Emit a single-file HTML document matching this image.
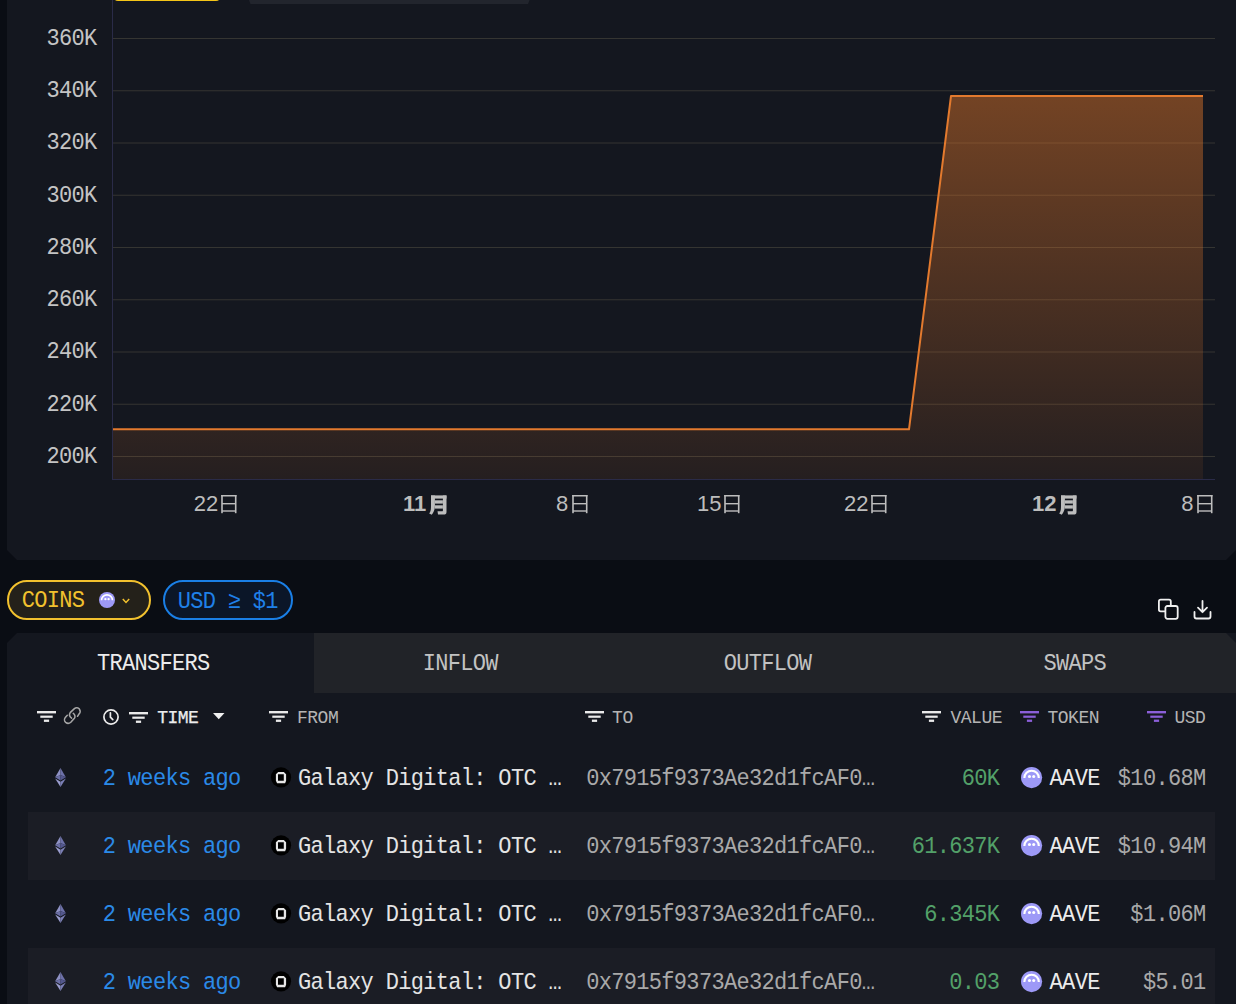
<!DOCTYPE html>
<html><head><meta charset="utf-8"><style>*{margin:0;padding:0;box-sizing:border-box}
html,body{width:1236px;height:1004px;overflow:hidden;background:#0a0d14;font-family:"Liberation Mono",monospace}
.a{position:absolute}
.m{position:absolute;white-space:nowrap;font-family:"Liberation Mono",monospace}
.s{position:absolute;white-space:nowrap;font-family:"Liberation Sans",sans-serif}
svg{position:absolute;overflow:visible}
</style></head><body>
<div class="a" style="left:7px;top:-40px;width:1229px;height:600px;background:#14171f;clip-path:polygon(0 0,100% 0,100% calc(100% - 10px),calc(100% - 10px) 100%,10px 100%,0 calc(100% - 10px))"></div>
<div class="a" style="left:113.5px;top:-5px;width:106.5px;height:6px;background:#f5c518;border-radius:0 0 4px 4px"></div>
<div class="a" style="left:246.5px;top:-6px;width:285.5px;height:10px;background:#22252d;clip-path:polygon(0 0,100% 0,calc(100% - 4px) 100%,4px 100%)"></div>
<svg style="left:0;top:0" width="1236" height="560">
<defs><linearGradient id="fg" x1="0" y1="96" x2="0" y2="479" gradientUnits="userSpaceOnUse">
<stop offset="0" stop-color="#e8792a" stop-opacity="0.45"/><stop offset="1" stop-color="#e8792a" stop-opacity="0.08"/></linearGradient></defs>
<g stroke="#353532" stroke-width="1"><line x1="113" y1="38.50" x2="1215" y2="38.50"/><line x1="113" y1="90.75" x2="1215" y2="90.75"/><line x1="113" y1="143.00" x2="1215" y2="143.00"/><line x1="113" y1="195.25" x2="1215" y2="195.25"/><line x1="113" y1="247.50" x2="1215" y2="247.50"/><line x1="113" y1="299.75" x2="1215" y2="299.75"/><line x1="113" y1="352.00" x2="1215" y2="352.00"/><line x1="113" y1="404.25" x2="1215" y2="404.25"/><line x1="113" y1="456.50" x2="1215" y2="456.50"/></g>
<path d="M113 429.3 L909 429.3 L951 96 L1203 96 L1203 479 L113 479 Z" fill="url(#fg)"/>
<path d="M113 429.3 L909 429.3 L951 96 L1203 96" fill="none" stroke="#e37a2e" stroke-width="2" stroke-linejoin="round"/>
<line x1="112.5" y1="0" x2="112.5" y2="480" stroke="#2a2b48" stroke-width="1"/>
<line x1="112" y1="479.5" x2="1215" y2="479.5" stroke="#2a2b48" stroke-width="1"/>
</svg>
<div class="m" style="left:-303.50px;width:400px;text-align:right;top:25.95px;font-size:22px;letter-spacing:-0.68px;line-height:28px;color:#c4c4c4;transform:scaleY(1.07);transform-origin:0 19.85px;">360K</div>
<div class="m" style="left:-303.50px;width:400px;text-align:right;top:78.20px;font-size:22px;letter-spacing:-0.68px;line-height:28px;color:#c4c4c4;transform:scaleY(1.07);transform-origin:0 19.85px;">340K</div>
<div class="m" style="left:-303.50px;width:400px;text-align:right;top:130.45px;font-size:22px;letter-spacing:-0.68px;line-height:28px;color:#c4c4c4;transform:scaleY(1.07);transform-origin:0 19.85px;">320K</div>
<div class="m" style="left:-303.50px;width:400px;text-align:right;top:182.70px;font-size:22px;letter-spacing:-0.68px;line-height:28px;color:#c4c4c4;transform:scaleY(1.07);transform-origin:0 19.85px;">300K</div>
<div class="m" style="left:-303.50px;width:400px;text-align:right;top:234.95px;font-size:22px;letter-spacing:-0.68px;line-height:28px;color:#c4c4c4;transform:scaleY(1.07);transform-origin:0 19.85px;">280K</div>
<div class="m" style="left:-303.50px;width:400px;text-align:right;top:287.20px;font-size:22px;letter-spacing:-0.68px;line-height:28px;color:#c4c4c4;transform:scaleY(1.07);transform-origin:0 19.85px;">260K</div>
<div class="m" style="left:-303.50px;width:400px;text-align:right;top:339.45px;font-size:22px;letter-spacing:-0.68px;line-height:28px;color:#c4c4c4;transform:scaleY(1.07);transform-origin:0 19.85px;">240K</div>
<div class="m" style="left:-303.50px;width:400px;text-align:right;top:391.70px;font-size:22px;letter-spacing:-0.68px;line-height:28px;color:#c4c4c4;transform:scaleY(1.07);transform-origin:0 19.85px;">220K</div>
<div class="m" style="left:-303.50px;width:400px;text-align:right;top:443.95px;font-size:22px;letter-spacing:-0.68px;line-height:28px;color:#c4c4c4;transform:scaleY(1.07);transform-origin:0 19.85px;">200K</div>
<div class="s" style="left:193.80px;top:490.87px;font-size:22px;line-height:26px;color:#bdbdbd;">22</div>
<svg width="16" height="19" viewBox="0 0 16 19" style="position:absolute;left:221.1px;top:494.8px"><g fill="#bdbdbd"><rect x="0.2" y="0" width="1.6" height="18.2"/><rect x="13.9" y="0" width="1.6" height="18.2"/><rect x="0.2" y="0" width="15.3" height="1.5"/><rect x="1" y="8" width="13.5" height="1.4"/><rect x="1" y="15.3" width="13.5" height="1.4"/></g></svg>
<div class="s" style="left:402.90px;top:490.87px;font-size:22px;line-height:26px;color:#bdbdbd;font-weight:bold;">11</div>
<svg width="19" height="20" viewBox="0 0 19 20" style="position:absolute;left:428px;top:494.5px"><g fill="#bdbdbd"><path d="M3 0.4H6.9V11C6.9 14.5 5.8 17.2 3.7 19.8L1.2 18.6C2.8 16.5 3 14 3 11Z"/><path d="M3 0.4H18.5V3.6H3Z"/><path d="M14.9 0.4H18.5V17C18.5 18.8 17.5 19.6 15.5 19.6H10L9.5 16.3H14.2C14.8 16.3 14.9 16 14.9 15.5Z"/><path d="M6.9 5.3H14.9V8.6H6.9Z"/><path d="M6.9 10.3H14.9V13.6H6.9Z"/></g></svg>
<div class="s" style="left:556.00px;top:490.87px;font-size:22px;line-height:26px;color:#bdbdbd;">8</div>
<svg width="16" height="19" viewBox="0 0 16 19" style="position:absolute;left:571.5px;top:494.8px"><g fill="#bdbdbd"><rect x="0.2" y="0" width="1.6" height="18.2"/><rect x="13.9" y="0" width="1.6" height="18.2"/><rect x="0.2" y="0" width="15.3" height="1.5"/><rect x="1" y="8" width="13.5" height="1.4"/><rect x="1" y="15.3" width="13.5" height="1.4"/></g></svg>
<div class="s" style="left:696.90px;top:490.87px;font-size:22px;line-height:26px;color:#bdbdbd;">15</div>
<svg width="16" height="19" viewBox="0 0 16 19" style="position:absolute;left:723.8px;top:494.8px"><g fill="#bdbdbd"><rect x="0.2" y="0" width="1.6" height="18.2"/><rect x="13.9" y="0" width="1.6" height="18.2"/><rect x="0.2" y="0" width="15.3" height="1.5"/><rect x="1" y="8" width="13.5" height="1.4"/><rect x="1" y="15.3" width="13.5" height="1.4"/></g></svg>
<div class="s" style="left:844.00px;top:490.87px;font-size:22px;line-height:26px;color:#bdbdbd;">22</div>
<svg width="16" height="19" viewBox="0 0 16 19" style="position:absolute;left:870.8px;top:494.8px"><g fill="#bdbdbd"><rect x="0.2" y="0" width="1.6" height="18.2"/><rect x="13.9" y="0" width="1.6" height="18.2"/><rect x="0.2" y="0" width="15.3" height="1.5"/><rect x="1" y="8" width="13.5" height="1.4"/><rect x="1" y="15.3" width="13.5" height="1.4"/></g></svg>
<div class="s" style="left:1031.90px;top:490.87px;font-size:22px;line-height:26px;color:#bdbdbd;font-weight:bold;">12</div>
<svg width="19" height="20" viewBox="0 0 19 20" style="position:absolute;left:1058px;top:494.5px"><g fill="#bdbdbd"><path d="M3 0.4H6.9V11C6.9 14.5 5.8 17.2 3.7 19.8L1.2 18.6C2.8 16.5 3 14 3 11Z"/><path d="M3 0.4H18.5V3.6H3Z"/><path d="M14.9 0.4H18.5V17C18.5 18.8 17.5 19.6 15.5 19.6H10L9.5 16.3H14.2C14.8 16.3 14.9 16 14.9 15.5Z"/><path d="M6.9 5.3H14.9V8.6H6.9Z"/><path d="M6.9 10.3H14.9V13.6H6.9Z"/></g></svg>
<div class="s" style="left:1181.30px;top:490.87px;font-size:22px;line-height:26px;color:#bdbdbd;">8</div>
<svg width="16" height="19" viewBox="0 0 16 19" style="position:absolute;left:1196.8px;top:494.8px"><g fill="#bdbdbd"><rect x="0.2" y="0" width="1.6" height="18.2"/><rect x="13.9" y="0" width="1.6" height="18.2"/><rect x="0.2" y="0" width="15.3" height="1.5"/><rect x="1" y="8" width="13.5" height="1.4"/><rect x="1" y="15.3" width="13.5" height="1.4"/></g></svg>
<div class="a" style="left:7px;top:580px;width:144px;height:39.5px;border:2px solid #f2c12e;border-radius:20px;background:#24211a"></div>
<div class="m" style="left:21.70px;top:588.45px;font-size:22px;line-height:28px;color:#f2c12e;transform:scaleY(1.07);transform-origin:0 19.85px;letter-spacing:-0.68px;">COINS</div>
<svg width="16" height="16" viewBox="0 0 22 22" style="left:99px;top:592px"><circle cx="11" cy="11" r="11" fill="#9d99f7"/><path d="M3.5 11.4A7.5 7.5 0 0 1 18.5 11.4" fill="none" stroke="#fff" stroke-width="2.2"/><circle cx="8.8" cy="9.9" r="1.6" fill="#fff"/><circle cx="13.2" cy="9.9" r="1.6" fill="#fff"/></svg>
<svg width="8" height="6" viewBox="0 0 8 6" style="left:121.5px;top:597.5px"><path d="M0.8 1L4 4.4L7.2 1" fill="none" stroke="#f2c12e" stroke-width="1.5"/></svg>
<div class="a" style="left:163px;top:580px;width:130px;height:40px;border:2px solid #1a7fe6;border-radius:20px;background:#0b1628"></div>
<div class="m" style="left:177.70px;top:588.85px;font-size:22px;line-height:28px;color:#1f80e8;transform:scaleY(1.07);transform-origin:0 19.85px;letter-spacing:-0.68px;">USD ≥ $1</div>
<svg width="22" height="22" viewBox="0 0 22 22" style="left:1157px;top:598px"><g fill="none" stroke="#f0f0f0" stroke-width="1.8" stroke-linejoin="round"><path d="M13.8 7.9V3.5C13.8 2.4 13.1 1.7 12 1.7H3.7C2.6 1.7 1.9 2.4 1.9 3.5V11.6C1.9 12.7 2.6 13.4 3.7 13.4H8.3"/><rect x="8.4" y="8" width="12.3" height="12.8" rx="2"/></g></svg>
<svg width="20" height="20" viewBox="0 0 20 20" style="left:1192.5px;top:599.5px"><g fill="none" stroke="#f0f0f0" stroke-width="1.8" stroke-linecap="round" stroke-linejoin="round"><path d="M9.5 1V12M5 7.7L9.5 12.2L14 7.7"/><path d="M1.5 12V16.5C1.5 18 2.2 18.5 3.5 18.5H15.5C17 18.5 17.5 18 17.5 16.5V12"/></g></svg>
<div class="a" style="left:7px;top:633px;width:1229px;height:400px;background:#14171f;clip-path:polygon(10px 0,100% 0,100% 100%,0 100%,0 10px)"></div>
<div class="a" style="left:314px;top:633px;width:922px;height:60px;background:#212328;clip-path:polygon(0 0,calc(100% - 10px) 0,100% 10px,100% 100%,0 100%)"></div>
<div class="m" style="left:96.90px;top:651.15px;font-size:22px;line-height:28px;color:#ececec;transform:scaleY(1.07);transform-origin:0 19.85px;letter-spacing:-0.68px;">TRANSFERS</div>
<div class="m" style="left:422.70px;top:651.05px;font-size:22px;line-height:28px;color:#c2c2c2;transform:scaleY(1.07);transform-origin:0 19.85px;letter-spacing:-0.68px;">INFLOW</div>
<div class="m" style="left:723.70px;top:651.05px;font-size:22px;line-height:28px;color:#c2c2c2;transform:scaleY(1.07);transform-origin:0 19.85px;letter-spacing:-0.68px;">OUTFLOW</div>
<div class="m" style="left:1043.40px;top:651.05px;font-size:22px;line-height:28px;color:#c2c2c2;transform:scaleY(1.07);transform-origin:0 19.85px;letter-spacing:-0.68px;">SWAPS</div>
<svg width="20" height="12" viewBox="0 0 20 12" style="left:37.1px;top:711.4px"><g fill="#eaeaea"><rect x="0" y="0" width="19" height="2.4"/><rect x="3.3" y="4.6" width="12.4" height="2.2"/><rect x="6.9" y="8.6" width="5.2" height="2.3"/></g></svg>
<svg width="21" height="21" viewBox="0 0 21 21" style="left:62px;top:705px"><g fill="none" stroke="#a6a6a6" stroke-width="1.55" stroke-linecap="round"><path d="M9.6 13.1C7.8 11.8 6.9 9.6 8.2 7.6L12.4 3.6C14 2.3 16.2 2.6 17.4 4.1C18.4 5.6 18.2 7.7 17 9L15.5 11.3"/><path d="M5.3 10.3L3.3 12.4C2.1 13.9 2.3 16.2 3.7 17.4C5.2 18.6 7.5 18.4 8.8 17.2L12.4 13.3C13.5 11.8 13 9.6 11.3 8.4"/></g></svg>
<svg width="18" height="18" viewBox="0 0 18 18" style="left:101.5px;top:707.8px"><g fill="none" stroke="#ececec" stroke-width="1.7" stroke-linecap="round"><circle cx="9" cy="9" r="7.1"/><path d="M8.4 4.8V9.2L10.8 11.6"/></g></svg>
<svg width="20" height="12" viewBox="0 0 20 12" style="left:128.9px;top:711.5px"><g fill="#eaeaea"><rect x="0" y="0" width="19" height="2.4"/><rect x="3.3" y="4.6" width="12.4" height="2.2"/><rect x="6.9" y="8.6" width="5.2" height="2.3"/></g></svg>
<div class="m" style="left:157.20px;top:706.71px;font-size:18px;line-height:23px;color:#ececec;letter-spacing:-0.5px;-webkit-text-stroke:0.25px #ececec;">TIME</div>
<svg width="12" height="7" viewBox="0 0 12 7" style="left:212.5px;top:713.3px"><path d="M0 0H11.5L5.75 6.3Z" fill="#f0f0f0"/></svg>
<svg width="20" height="12" viewBox="0 0 20 12" style="left:268.9px;top:711.2px"><g fill="#eaeaea"><rect x="0" y="0" width="19" height="2.4"/><rect x="3.3" y="4.6" width="12.4" height="2.2"/><rect x="6.9" y="8.6" width="5.2" height="2.3"/></g></svg>
<div class="m" style="left:297.00px;top:706.81px;font-size:18px;line-height:23px;color:#b4b4b4;letter-spacing:-0.5px;">FROM</div>
<svg width="20" height="12" viewBox="0 0 20 12" style="left:584.9px;top:711.4px"><g fill="#eaeaea"><rect x="0" y="0" width="19" height="2.4"/><rect x="3.3" y="4.6" width="12.4" height="2.2"/><rect x="6.9" y="8.6" width="5.2" height="2.3"/></g></svg>
<div class="m" style="left:612.10px;top:706.81px;font-size:18px;line-height:23px;color:#b4b4b4;letter-spacing:-0.5px;">TO</div>
<svg width="20" height="12" viewBox="0 0 20 12" style="left:922.1px;top:711.4px"><g fill="#eaeaea"><rect x="0" y="0" width="19" height="2.4"/><rect x="3.3" y="4.6" width="12.4" height="2.2"/><rect x="6.9" y="8.6" width="5.2" height="2.3"/></g></svg>
<div class="m" style="left:950.50px;top:706.81px;font-size:18px;line-height:23px;color:#b4b4b4;letter-spacing:-0.5px;">VALUE</div>
<svg width="20" height="12" viewBox="0 0 20 12" style="left:1020px;top:711.4px"><g fill="#8b5fd8"><rect x="0" y="0" width="19" height="2.4"/><rect x="3.3" y="4.6" width="12.4" height="2.2"/><rect x="6.9" y="8.6" width="5.2" height="2.3"/></g></svg>
<div class="m" style="left:1047.50px;top:706.81px;font-size:18px;line-height:23px;color:#b4b4b4;letter-spacing:-0.5px;">TOKEN</div>
<svg width="20" height="12" viewBox="0 0 20 12" style="left:1147.2px;top:711.4px"><g fill="#8b5fd8"><rect x="0" y="0" width="19" height="2.4"/><rect x="3.3" y="4.6" width="12.4" height="2.2"/><rect x="6.9" y="8.6" width="5.2" height="2.3"/></g></svg>
<div class="m" style="left:1174.50px;top:706.81px;font-size:18px;line-height:23px;color:#b4b4b4;letter-spacing:-0.5px;">USD</div>
<svg width="11" height="19" viewBox="0 0 10.6 18.8" style="left:54.6px;top:768px"><path d="M5.3 0L0 9.2L5.3 7Z" fill="#8e91c4"/><path d="M5.3 0L10.6 9.2L5.3 7Z" fill="#6d71a9"/><path d="M0 9.2L5.3 12.4L5.3 7Z" fill="#6a6ea5"/><path d="M10.6 9.2L5.3 12.4L5.3 7Z" fill="#53578d"/><path d="M0 10.4L5.3 18.8L5.3 13.6Z" fill="#9a9dce"/><path d="M10.6 10.4L5.3 18.8L5.3 13.6Z" fill="#7b7fb6"/></svg>
<div class="m" style="left:102.80px;top:765.95px;font-size:22px;line-height:28px;color:#2b8ae8;transform:scaleY(1.07);transform-origin:0 19.85px;letter-spacing:-0.68px;">2 weeks ago</div>
<svg width="26" height="26" viewBox="0 0 26 26" style="left:268px;top:764px"><circle cx="13" cy="13.3" r="10.1" fill="#000"/><path fill-rule="evenodd" fill="#e6e6e6" d="M10.2 8H15.8L18.1 10.3V16.8L17.1 19.2H9.1L7.9 16.8V10.3Z M10 10.2V16.7H15.8V10.2Z"/></svg>
<div class="m" style="left:298.00px;top:765.95px;font-size:22px;line-height:28px;color:#e4e4e4;transform:scaleY(1.07);transform-origin:0 19.85px;letter-spacing:-0.68px;">Galaxy Digital: OTC …</div>
<div class="m" style="left:586.20px;top:765.95px;font-size:22px;line-height:28px;color:#a9a9a9;transform:scaleY(1.07);transform-origin:0 19.85px;letter-spacing:-0.68px;">0x7915f9373Ae32d1fcAF0…</div>
<div class="m" style="left:599.30px;width:400px;text-align:right;top:765.95px;font-size:22px;letter-spacing:-0.68px;line-height:28px;color:#53a169;transform:scaleY(1.07);transform-origin:0 19.85px;">60K</div>
<svg width="21.2" height="21.2" viewBox="0 0 22 22" style="left:1020.9px;top:766.9px"><circle cx="11" cy="11" r="11" fill="#9d99f7"/><path d="M3.5 11.4A7.5 7.5 0 0 1 18.5 11.4" fill="none" stroke="#fff" stroke-width="2.2"/><circle cx="8.8" cy="9.9" r="1.6" fill="#fff"/><circle cx="13.2" cy="9.9" r="1.6" fill="#fff"/></svg>
<div class="m" style="left:1049.60px;top:765.95px;font-size:22px;line-height:28px;color:#ececec;transform:scaleY(1.07);transform-origin:0 19.85px;letter-spacing:-0.68px;">AAVE</div>
<div class="m" style="left:805.50px;width:400px;text-align:right;top:765.95px;font-size:22px;letter-spacing:-0.68px;line-height:28px;color:#a9a9a9;transform:scaleY(1.07);transform-origin:0 19.85px;">$10.68M</div>
<div class="a" style="left:28px;top:812px;width:1187px;height:68px;background:#1b1d25"></div>
<svg width="11" height="19" viewBox="0 0 10.6 18.8" style="left:54.6px;top:836px"><path d="M5.3 0L0 9.2L5.3 7Z" fill="#8e91c4"/><path d="M5.3 0L10.6 9.2L5.3 7Z" fill="#6d71a9"/><path d="M0 9.2L5.3 12.4L5.3 7Z" fill="#6a6ea5"/><path d="M10.6 9.2L5.3 12.4L5.3 7Z" fill="#53578d"/><path d="M0 10.4L5.3 18.8L5.3 13.6Z" fill="#9a9dce"/><path d="M10.6 10.4L5.3 18.8L5.3 13.6Z" fill="#7b7fb6"/></svg>
<div class="m" style="left:102.80px;top:833.95px;font-size:22px;line-height:28px;color:#2b8ae8;transform:scaleY(1.07);transform-origin:0 19.85px;letter-spacing:-0.68px;">2 weeks ago</div>
<svg width="26" height="26" viewBox="0 0 26 26" style="left:268px;top:832px"><circle cx="13" cy="13.3" r="10.1" fill="#000"/><path fill-rule="evenodd" fill="#e6e6e6" d="M10.2 8H15.8L18.1 10.3V16.8L17.1 19.2H9.1L7.9 16.8V10.3Z M10 10.2V16.7H15.8V10.2Z"/></svg>
<div class="m" style="left:298.00px;top:833.95px;font-size:22px;line-height:28px;color:#e4e4e4;transform:scaleY(1.07);transform-origin:0 19.85px;letter-spacing:-0.68px;">Galaxy Digital: OTC …</div>
<div class="m" style="left:586.20px;top:833.95px;font-size:22px;line-height:28px;color:#a9a9a9;transform:scaleY(1.07);transform-origin:0 19.85px;letter-spacing:-0.68px;">0x7915f9373Ae32d1fcAF0…</div>
<div class="m" style="left:599.30px;width:400px;text-align:right;top:833.95px;font-size:22px;letter-spacing:-0.68px;line-height:28px;color:#53a169;transform:scaleY(1.07);transform-origin:0 19.85px;">61.637K</div>
<svg width="21.2" height="21.2" viewBox="0 0 22 22" style="left:1020.9px;top:834.9px"><circle cx="11" cy="11" r="11" fill="#9d99f7"/><path d="M3.5 11.4A7.5 7.5 0 0 1 18.5 11.4" fill="none" stroke="#fff" stroke-width="2.2"/><circle cx="8.8" cy="9.9" r="1.6" fill="#fff"/><circle cx="13.2" cy="9.9" r="1.6" fill="#fff"/></svg>
<div class="m" style="left:1049.60px;top:833.95px;font-size:22px;line-height:28px;color:#ececec;transform:scaleY(1.07);transform-origin:0 19.85px;letter-spacing:-0.68px;">AAVE</div>
<div class="m" style="left:805.50px;width:400px;text-align:right;top:833.95px;font-size:22px;letter-spacing:-0.68px;line-height:28px;color:#a9a9a9;transform:scaleY(1.07);transform-origin:0 19.85px;">$10.94M</div>
<svg width="11" height="19" viewBox="0 0 10.6 18.8" style="left:54.6px;top:904px"><path d="M5.3 0L0 9.2L5.3 7Z" fill="#8e91c4"/><path d="M5.3 0L10.6 9.2L5.3 7Z" fill="#6d71a9"/><path d="M0 9.2L5.3 12.4L5.3 7Z" fill="#6a6ea5"/><path d="M10.6 9.2L5.3 12.4L5.3 7Z" fill="#53578d"/><path d="M0 10.4L5.3 18.8L5.3 13.6Z" fill="#9a9dce"/><path d="M10.6 10.4L5.3 18.8L5.3 13.6Z" fill="#7b7fb6"/></svg>
<div class="m" style="left:102.80px;top:901.95px;font-size:22px;line-height:28px;color:#2b8ae8;transform:scaleY(1.07);transform-origin:0 19.85px;letter-spacing:-0.68px;">2 weeks ago</div>
<svg width="26" height="26" viewBox="0 0 26 26" style="left:268px;top:900px"><circle cx="13" cy="13.3" r="10.1" fill="#000"/><path fill-rule="evenodd" fill="#e6e6e6" d="M10.2 8H15.8L18.1 10.3V16.8L17.1 19.2H9.1L7.9 16.8V10.3Z M10 10.2V16.7H15.8V10.2Z"/></svg>
<div class="m" style="left:298.00px;top:901.95px;font-size:22px;line-height:28px;color:#e4e4e4;transform:scaleY(1.07);transform-origin:0 19.85px;letter-spacing:-0.68px;">Galaxy Digital: OTC …</div>
<div class="m" style="left:586.20px;top:901.95px;font-size:22px;line-height:28px;color:#a9a9a9;transform:scaleY(1.07);transform-origin:0 19.85px;letter-spacing:-0.68px;">0x7915f9373Ae32d1fcAF0…</div>
<div class="m" style="left:599.30px;width:400px;text-align:right;top:901.95px;font-size:22px;letter-spacing:-0.68px;line-height:28px;color:#53a169;transform:scaleY(1.07);transform-origin:0 19.85px;">6.345K</div>
<svg width="21.2" height="21.2" viewBox="0 0 22 22" style="left:1020.9px;top:902.9px"><circle cx="11" cy="11" r="11" fill="#9d99f7"/><path d="M3.5 11.4A7.5 7.5 0 0 1 18.5 11.4" fill="none" stroke="#fff" stroke-width="2.2"/><circle cx="8.8" cy="9.9" r="1.6" fill="#fff"/><circle cx="13.2" cy="9.9" r="1.6" fill="#fff"/></svg>
<div class="m" style="left:1049.60px;top:901.95px;font-size:22px;line-height:28px;color:#ececec;transform:scaleY(1.07);transform-origin:0 19.85px;letter-spacing:-0.68px;">AAVE</div>
<div class="m" style="left:805.50px;width:400px;text-align:right;top:901.95px;font-size:22px;letter-spacing:-0.68px;line-height:28px;color:#a9a9a9;transform:scaleY(1.07);transform-origin:0 19.85px;">$1.06M</div>
<div class="a" style="left:28px;top:948px;width:1187px;height:68px;background:#1b1d25"></div>
<svg width="11" height="19" viewBox="0 0 10.6 18.8" style="left:54.6px;top:972px"><path d="M5.3 0L0 9.2L5.3 7Z" fill="#8e91c4"/><path d="M5.3 0L10.6 9.2L5.3 7Z" fill="#6d71a9"/><path d="M0 9.2L5.3 12.4L5.3 7Z" fill="#6a6ea5"/><path d="M10.6 9.2L5.3 12.4L5.3 7Z" fill="#53578d"/><path d="M0 10.4L5.3 18.8L5.3 13.6Z" fill="#9a9dce"/><path d="M10.6 10.4L5.3 18.8L5.3 13.6Z" fill="#7b7fb6"/></svg>
<div class="m" style="left:102.80px;top:969.95px;font-size:22px;line-height:28px;color:#2b8ae8;transform:scaleY(1.07);transform-origin:0 19.85px;letter-spacing:-0.68px;">2 weeks ago</div>
<svg width="26" height="26" viewBox="0 0 26 26" style="left:268px;top:968px"><circle cx="13" cy="13.3" r="10.1" fill="#000"/><path fill-rule="evenodd" fill="#e6e6e6" d="M10.2 8H15.8L18.1 10.3V16.8L17.1 19.2H9.1L7.9 16.8V10.3Z M10 10.2V16.7H15.8V10.2Z"/></svg>
<div class="m" style="left:298.00px;top:969.95px;font-size:22px;line-height:28px;color:#e4e4e4;transform:scaleY(1.07);transform-origin:0 19.85px;letter-spacing:-0.68px;">Galaxy Digital: OTC …</div>
<div class="m" style="left:586.20px;top:969.95px;font-size:22px;line-height:28px;color:#a9a9a9;transform:scaleY(1.07);transform-origin:0 19.85px;letter-spacing:-0.68px;">0x7915f9373Ae32d1fcAF0…</div>
<div class="m" style="left:599.30px;width:400px;text-align:right;top:969.95px;font-size:22px;letter-spacing:-0.68px;line-height:28px;color:#53a169;transform:scaleY(1.07);transform-origin:0 19.85px;">0.03</div>
<svg width="21.2" height="21.2" viewBox="0 0 22 22" style="left:1020.9px;top:970.9px"><circle cx="11" cy="11" r="11" fill="#9d99f7"/><path d="M3.5 11.4A7.5 7.5 0 0 1 18.5 11.4" fill="none" stroke="#fff" stroke-width="2.2"/><circle cx="8.8" cy="9.9" r="1.6" fill="#fff"/><circle cx="13.2" cy="9.9" r="1.6" fill="#fff"/></svg>
<div class="m" style="left:1049.60px;top:969.95px;font-size:22px;line-height:28px;color:#ececec;transform:scaleY(1.07);transform-origin:0 19.85px;letter-spacing:-0.68px;">AAVE</div>
<div class="m" style="left:805.50px;width:400px;text-align:right;top:969.95px;font-size:22px;letter-spacing:-0.68px;line-height:28px;color:#a9a9a9;transform:scaleY(1.07);transform-origin:0 19.85px;">$5.01</div>
</body></html>
